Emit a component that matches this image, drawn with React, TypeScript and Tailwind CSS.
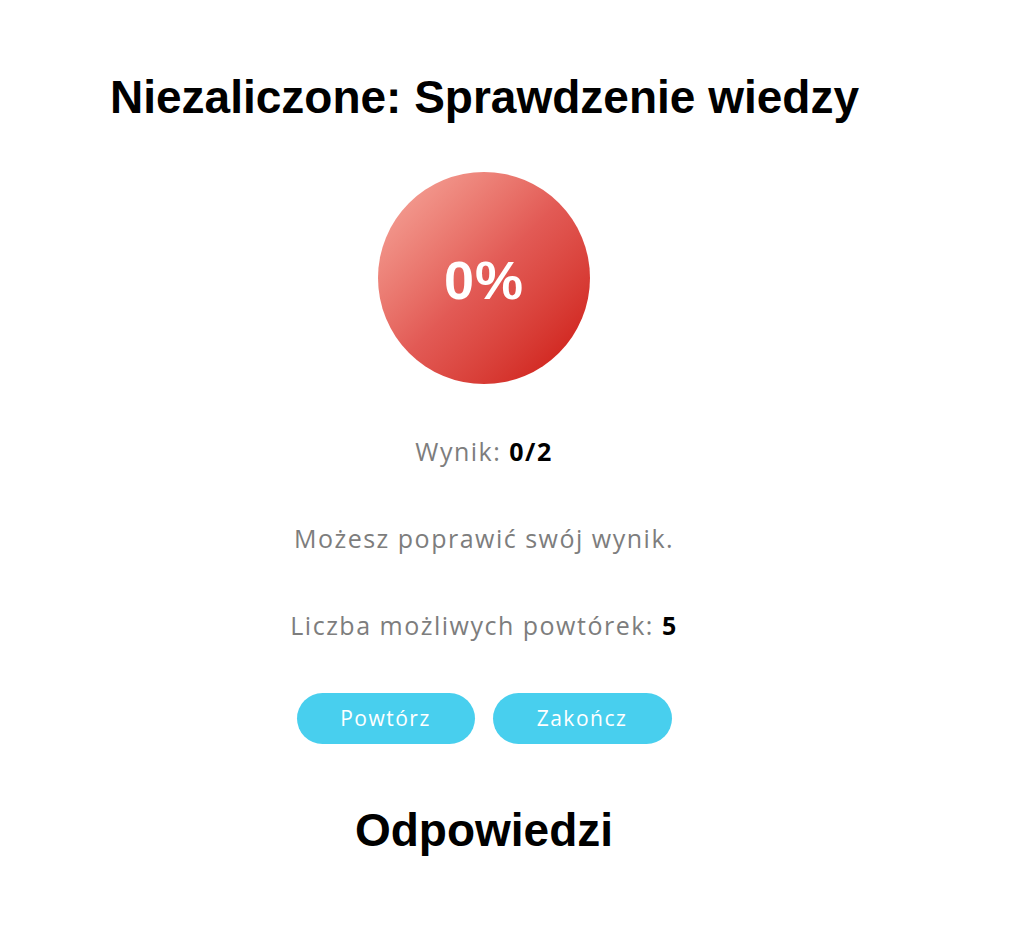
export default function App() {
  return (
    <div className="min-h-[937px] bg-white font-['Open_Sans',sans-serif]">
      <div className="ml-[110px] w-[748px] pt-[70px] flex flex-col items-center">
        <h1 className="w-full whitespace-nowrap text-[46px] leading-[54px] font-bold text-black font-['Liberation_Sans',sans-serif]">
          Niezaliczone: Sprawdzenie wiedzy
        </h1>

        <div className="mt-[48px] w-[212px] h-[212px] rounded-full bg-gradient-to-br from-[#f6aba0] via-[#e25a55] to-[#cc0000] flex items-center justify-center">
          <span className="text-white text-[54px] font-bold tracking-[1px] font-['Liberation_Sans',sans-serif] mt-[4px]">0%</span>
        </div>

        <p className="mt-[50px] text-[25px] leading-[34px] tracking-[1.5px] text-[#7d7d7d]">
          Wynik: <span className="font-bold text-black">0/2</span>
        </p>

        <p className="mt-[53px] text-[25px] leading-[34px] tracking-[1.5px] text-[#7d7d7d]">
          Możesz poprawić swój wynik.
        </p>

        <p className="mt-[53px] text-[25px] leading-[34px] tracking-[1.5px] text-[#7d7d7d]">
          Liczba możliwych powtórek: <span className="font-bold text-black">5</span>
        </p>

        <div className="mt-[51px] flex gap-[18px]">
          <button className="w-[178px] h-[51px] rounded-full bg-[#48cfee] text-white text-[21px] tracking-[1.5px]">
            Powtórz
          </button>
          <button className="w-[179px] h-[51px] rounded-full bg-[#48cfee] text-white text-[21px] tracking-[1.5px]">
            Zakończ
          </button>
        </div>

        <h2 className="mt-[59px] text-[46px] leading-[54px] font-bold text-black font-['Liberation_Sans',sans-serif]">
          Odpowiedzi
        </h2>
      </div>
    </div>
  );
}
